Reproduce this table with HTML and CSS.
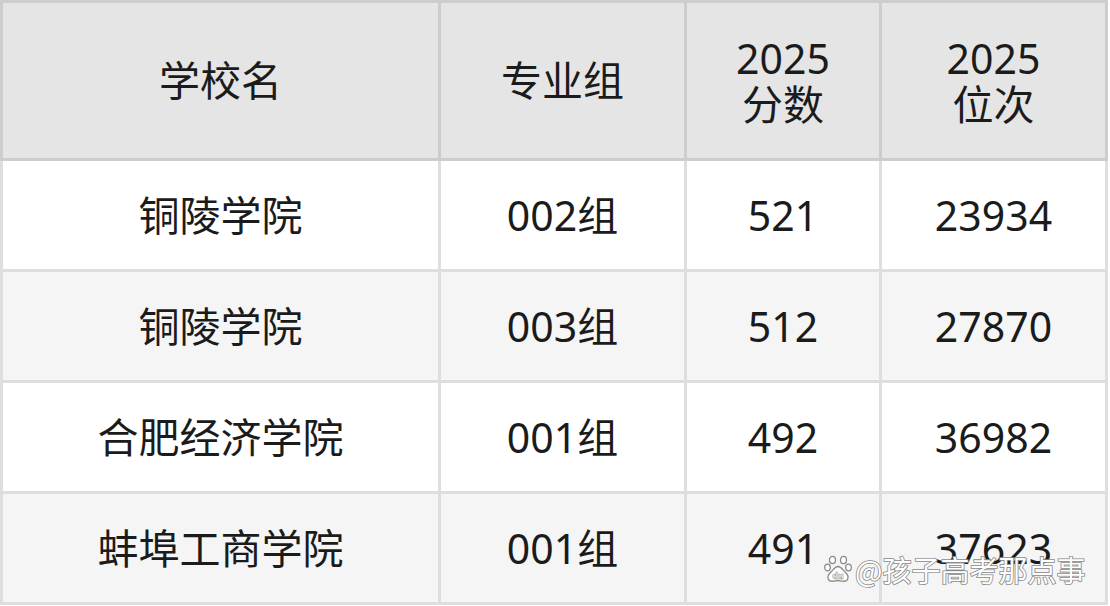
FILE: index.html
```html
<!DOCTYPE html>
<html lang="zh">
<head>
<meta charset="utf-8">
<link rel="stylesheet" href="styles.css">
</head>
<body>
<div class="page">
  <div class="head">
    <div class="cell">学校名</div>
    <div class="cell">专业组</div>
    <div class="cell two">2025<br>分数</div>
    <div class="cell two">2025<br>位次</div>
  </div>
  <div class="body">
    <div class="cell">铜陵学院</div>
    <div class="cell">002组</div>
    <div class="cell">521</div>
    <div class="cell">23934</div>
    <div class="cell alt">铜陵学院</div>
    <div class="cell alt">003组</div>
    <div class="cell alt">512</div>
    <div class="cell alt">27870</div>
    <div class="cell">合肥经济学院</div>
    <div class="cell">001组</div>
    <div class="cell">492</div>
    <div class="cell">36982</div>
    <div class="cell alt">蚌埠工商学院</div>
    <div class="cell alt">001组</div>
    <div class="cell alt">491</div>
    <div class="cell alt">37623</div>
  </div>
  <div class="mark">
    <svg class="paw" width="28" height="28" viewBox="0 0 28 28">
      <g fill="#fff" stroke="#8a8a8a" stroke-width="1.3">
        <ellipse cx="8.5" cy="5" rx="3" ry="3.6"/>
        <ellipse cx="19.5" cy="5" rx="3" ry="3.6"/>
        <ellipse cx="3.5" cy="12.5" rx="2.8" ry="3.4"/>
        <ellipse cx="24.5" cy="12.5" rx="2.8" ry="3.4"/>
        <path d="M14 11.5c-3.2 0-4.6 3.4-7 5.6-2 1.8-3.4 3.4-3 5.8.5 2.8 3 3.6 5.4 3.3 1.8-.2 3-.7 4.6-.7s2.8.5 4.6.7c2.4.3 4.9-.5 5.4-3.3.4-2.4-1-4-3-5.8-2.4-2.2-3.8-5.6-7-5.6z"/>
      </g>
      <text x="14" y="24" text-anchor="middle" class="du">du</text>
    </svg>
    <span class="mtext">@孩子高考那点事</span>
  </div>
</div>
</body>
</html>
```
FILE: styles.css
```css
html, body {
  margin: 0;
  padding: 0;
  background: #ffffff;
}
.page {
  position: relative;
  width: 1108px;
  font-family: "Noto Sans", "Noto Sans CJK SC", sans-serif;
  color: #1b1b1b;
}
.head, .body {
  display: grid;
  grid-template-columns: 435px 243px 192px 223px;
  column-gap: 3px;
  row-gap: 3px;
}
.head {
  background: #cdcdcd;
  padding: 3px;
  grid-template-rows: 155px;
}
.body {
  background: #dedede;
  padding: 0 3px 3px;
  grid-template-rows: repeat(4, 108px);
}
.cell {
  display: flex;
  align-items: center;
  justify-content: center;
  text-align: center;
  font-size: 41px;
  line-height: 1;
  background: #ffffff;
}
.head .cell {
  background: #e5e5e5;
}
.head .cell.two {
  line-height: 46px;
}
.cell.alt {
  background: #f5f5f5;
}
.mark {
  position: absolute;
  left: 824px;
  top: 552px;
  display: flex;
  align-items: center;
  gap: 3px;
}
.paw {
  display: block;
}
.du {
  font-family: "DejaVu Sans", sans-serif;
  font-size: 8px;
  font-weight: bold;
  fill: #fff;
  stroke: #8a8a8a;
  stroke-width: 0.5;
}
.mtext {
  font-family: "Noto Sans CJK SC", sans-serif;
  font-size: 29px;
  line-height: 34px;
  color: #ffffff;
  -webkit-text-stroke: 1.6px #8c8c8c;
  paint-order: stroke fill;
  text-shadow: 0 0 1px rgba(0,0,0,0.15);
}
```
